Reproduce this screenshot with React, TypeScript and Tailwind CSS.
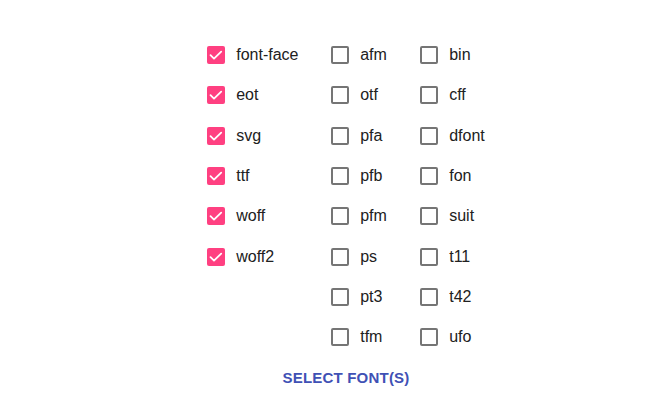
import React, { useState } from 'react'

const columns: { formats: string[]; width: string }[] = [
  { formats: ['font-face', 'eot', 'svg', 'ttf', 'woff', 'woff2'], width: 'w-[124px]' },
  { formats: ['afm', 'otf', 'pfa', 'pfb', 'pfm', 'ps', 'pt3', 'tfm'], width: 'w-[89px]' },
  { formats: ['bin', 'cff', 'dfont', 'fon', 'suit', 't11', 't42', 'ufo'], width: 'w-auto' },
]

const initial = ['font-face', 'eot', 'svg', 'ttf', 'woff', 'woff2']

function Checkbox({ checked }: { checked: boolean }) {
  if (checked) {
    return (
      <span className="flex h-[18px] w-[18px] shrink-0 items-center justify-center rounded-[2px] bg-[#ff4081]">
        <svg width="18" height="18" viewBox="0 0 18 18" fill="none">
          <path d="M3.5 9.2 L7 12.6 L14.2 5.6" stroke="white" strokeWidth="1.8" strokeLinecap="round" strokeLinejoin="round" />
        </svg>
      </span>
    )
  }
  return <span className="block h-[18px] w-[18px] shrink-0 rounded-[2px] border-2 border-[#757575] bg-white" />
}

export default function App() {
  const [selected, setSelected] = useState<string[]>(initial)

  const toggle = (f: string) =>
    setSelected((s) => (s.includes(f) ? s.filter((x) => x !== f) : [...s, f]))

  return (
    <div
      className="flex h-[416px] w-[656px] flex-col items-center bg-white pl-[36px] pt-[35px] text-[#212121]"
      style={{ fontFamily: '"Liberation Sans", Arial, sans-serif' }}
    >
      <div className="flex">
        {columns.map((col, i) => (
          <div key={i} className={`flex flex-col ${col.width}`}>
            {col.formats.map((f) => (
              <label
                key={f}
                onClick={() => toggle(f)}
                className="flex h-[40.3px] cursor-pointer select-none items-center"
              >
                <Checkbox checked={selected.includes(f)} />
                <span className="ml-[11px] text-[16px] leading-none">{f}</span>
              </label>
            ))}
          </div>
        ))}
      </div>
      <button className="mt-[3px] flex h-9 items-center px-2 text-[15px] font-bold tracking-[0.2px] text-[#3f51b5]">
        SELECT FONT(S)
      </button>
    </div>
  )
}
